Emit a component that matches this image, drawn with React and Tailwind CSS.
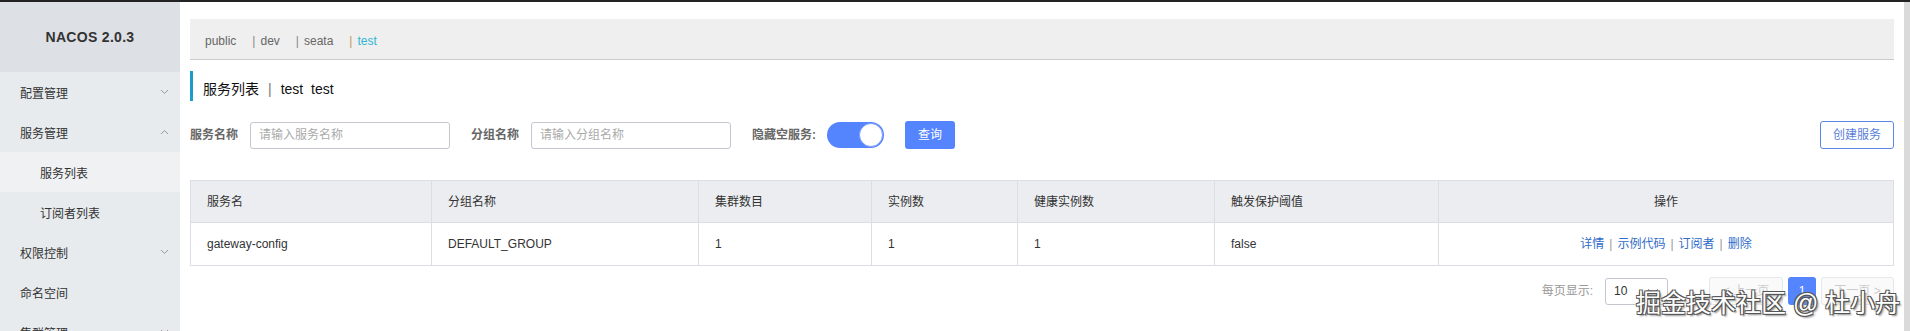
import React from 'react';

const FONT = "font-['Liberation_Sans','Noto_Sans_CJK_SC',sans-serif]";

const menu = [
  { label: '配置管理', arrow: 'down' },
  { label: '服务管理', arrow: 'up' },
  { label: '服务列表', sub: true, active: true },
  { label: '订阅者列表', sub: true },
  { label: '权限控制', arrow: 'down' },
  { label: '命名空间' },
  { label: '集群管理', arrow: 'down' },
];

const columns = [
  { title: '服务名', width: 241 },
  { title: '分组名称', width: 267 },
  { title: '集群数目', width: 173 },
  { title: '实例数', width: 146 },
  { title: '健康实例数', width: 197 },
  { title: '触发保护阈值', width: 224 },
  { title: '操作', width: 455, center: true },
];

const rows = [['gateway-config', 'DEFAULT_GROUP', '1', '1', '1', 'false']];

function Chevron({ dir }) {
  return (
    <svg width="9" height="6" viewBox="0 0 9 6" className="text-[#999]">
      <path
        d={dir === 'up' ? 'M1 5L4.5 1.5L8 5' : 'M1 1L4.5 4.5L8 1'}
        fill="none"
        stroke="currentColor"
        strokeWidth="1"
      />
    </svg>
  );
}

function Sidebar() {
  return (
    <aside className="w-[180px] shrink-0 bg-[#e8ebee] flex flex-col">
      <div className="h-[70px] shrink-0 bg-[#dde0e4] flex items-center justify-center text-[14px] font-bold text-[#333] tracking-[0.3px]">
        NACOS 2.0.3
      </div>
      {menu.map((item) => (
        <div
          key={item.label}
          className={`h-[40px] shrink-0 flex items-center justify-between pr-[11px] text-[12px] text-[#333] ${
            item.sub ? 'pl-[40px]' : 'pl-[20px]'
          } ${item.active ? 'bg-[#eff1f3]' : ''}`}
        >
          <span className="pt-[4px]">{item.label}</span>
          {item.arrow && <Chevron dir={item.arrow} />}
        </div>
      ))}
    </aside>
  );
}

function Field({ label, placeholder }) {
  return (
    <div className="flex items-center">
      <span className="text-[12px] font-bold text-[#666] mr-[12px]">{label}</span>
      <div className="w-[200px] h-[27px] border border-[#c4c6cf] rounded-[3px] flex items-center px-[8px] text-[12px] text-[#aaa]">
        {placeholder}
      </div>
    </div>
  );
}

export default function App() {
  return (
    <div className={`w-[1910px] h-[331px] overflow-hidden bg-white relative flex flex-col ${FONT}`}>
      <div className="h-[2px] shrink-0 bg-[#232323]" />
      <div className="flex flex-1 min-h-0">
        <Sidebar />
        <main className="flex-1 px-[10px] pt-[17px] flex flex-col">
          {/* namespaces */}
          <div className="h-[41px] bg-[#efefef] border-b border-[#cccccc] flex items-center pl-[15px] pt-[4px] text-[12px] text-[#666]">
            <span>public</span>
            <span className="ml-[16px] text-[#888]">|</span>
            <span className="ml-[5px]">dev</span>
            <span className="ml-[16px] text-[#888]">|</span>
            <span className="ml-[5px]">seata</span>
            <span className="ml-[16px] text-[#b89a5a]">|</span>
            <span className="ml-[5px] text-[#2fb6d6]">test</span>
          </div>

          {/* title */}
          <div className="mt-[11px] h-[30px] border-l-[3px] border-[#1d9bcb] pl-[10px] pt-[7px] flex items-center text-[14px] text-[#111] whitespace-pre">
            <span>服务列表</span>
            <span className="mx-[9px] text-[#777]">|</span>
            <span>test  test</span>
          </div>

          {/* filters */}
          <div className="mt-[20px] h-[28px] flex items-center">
            <Field label="服务名称" placeholder="请输入服务名称" />
            <div className="ml-[21px]">
              <Field label="分组名称" placeholder="请输入分组名称" />
            </div>
            <span className="ml-[21px] text-[12px] font-bold text-[#666]">隐藏空服务:</span>
            <div className="ml-[11px] w-[57px] h-[26px] rounded-full bg-[#5584ff] flex items-center justify-end pr-[1px]">
              <div className="w-[24px] h-[24px] rounded-full bg-white border border-[#7b9cff]" />
            </div>
            <button className="ml-[21px] w-[50px] h-[28px] rounded-[3px] bg-[#5584ff] text-white text-[12px]">
              查询
            </button>
            <button className="ml-auto w-[74px] h-[28px] rounded-[3px] border border-[#5b86e6] text-[#5a7fd8] text-[12px] bg-white">
              创建服务
            </button>
          </div>

          {/* table */}
          <table className="mt-[31px] w-[1703px] table-fixed border-collapse text-[12px] text-[#333]">
            <colgroup>
              {columns.map((c) => (
                <col key={c.title} style={{ width: c.width }} />
              ))}
            </colgroup>
            <thead>
              <tr className="h-[42px] bg-[#ebedf0]">
                {columns.map((c) => (
                  <th
                    key={c.title}
                    className={`border border-[#dcdee3] px-[16px] font-normal ${c.center ? 'text-center' : 'text-left'}`}
                  >
                    {c.title}
                  </th>
                ))}
              </tr>
            </thead>
            <tbody>
              {rows.map((r) => (
                <tr key={r[0]} className="h-[43px]">
                  {r.map((v, i) => (
                    <td key={i} className="border border-[#dcdee3] px-[16px] text-left">
                      {v}
                    </td>
                  ))}
                  <td className="border border-[#dcdee3] px-[16px] text-center text-[#2f6bc8]">
                    <span>详情</span>
                    <span className="mx-[5px] text-[#999]">|</span>
                    <span>示例代码</span>
                    <span className="mx-[5px] text-[#999]">|</span>
                    <span>订阅者</span>
                    <span className="mx-[5px] text-[#999]">|</span>
                    <span>删除</span>
                  </td>
                </tr>
              ))}
            </tbody>
          </table>

          {/* pagination */}
          <div className="mt-[11px] h-[28px] flex items-center justify-end text-[12px]">
            <span className="text-[#999] mr-[12px]">每页显示:</span>
            <div className="w-[63px] h-[27px] border border-[#c4c6cf] rounded-[3px] flex items-center justify-between px-[8px] text-[#333]">
              <span>10</span>
              <svg width="12" height="7" viewBox="0 0 12 7">
                <path d="M1 1L6 6L11 1" fill="none" stroke="#999" strokeWidth="1" />
              </svg>
            </div>
            <div className="ml-[41px] w-[74px] h-[28px] border border-[#e6e7eb] bg-[#fafafa] rounded-[3px] flex items-center justify-center text-[#ccc]">
              &lt; 上一页
            </div>
            <div className="ml-[5px] w-[28px] h-[28px] rounded-[3px] bg-[#5584ff] text-white flex items-center justify-center">
              1
            </div>
            <div className="ml-[5px] w-[73px] h-[28px] border border-[#e6e7eb] bg-[#fafafa] rounded-[3px] flex items-center justify-center text-[#ccc]">
              下一页 &gt;
            </div>
          </div>
        </main>
        <div className="w-[7px] shrink-0 bg-[#dadada]" />
      </div>

      {/* watermark */}
      <div className="absolute left-[1636px] top-[285px] text-[25px] text-white whitespace-pre [text-shadow:1px_1px_0_#555,-1px_-1px_0_#555,1px_-1px_0_#555,-1px_1px_0_#555,2px_2px_2px_#888]">
        掘金技术社区 @ 杜小舟
      </div>
    </div>
  );
}
